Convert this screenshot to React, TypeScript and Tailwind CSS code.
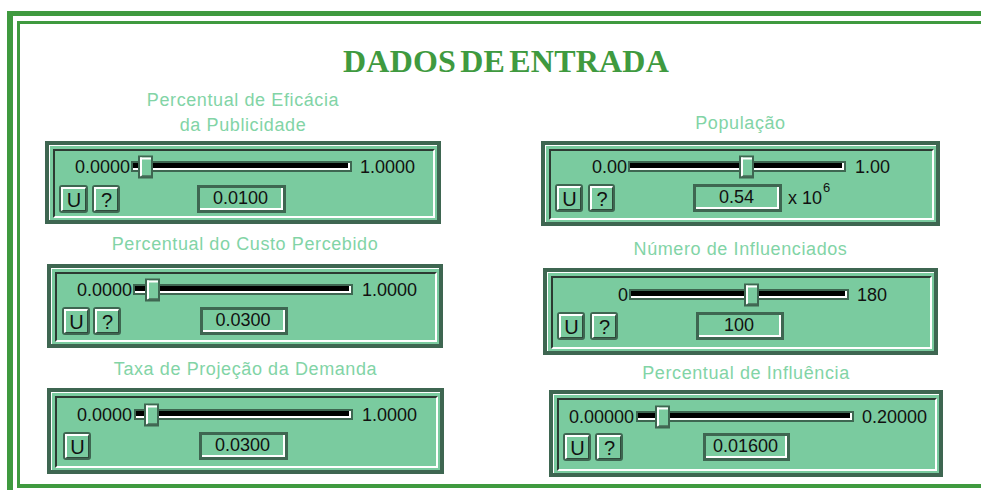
import React from "react";

type Panel = {
  label: string[];
  labelCls: string;
  box: string;
  min: string;
  minCls: string;
  max: string;
  maxCls: string;
  trackCls: string;
  thumbCls: string;
  rowCls: string;
  btnRowCls: string;
  uCls: string;
  qCls?: string;
  valCls: string;
  value: string;
  suffix?: boolean;
};

const left: Panel[] = [
  {
    label: ["Percentual de Eficácia", "da Publicidade"],
    labelCls: "ml-[25px] w-[396px] pt-[3px] mb-[3px]",
    box: "ml-[25px] w-[396px] h-[83px]",
    min: "0.0000",
    minCls: "w-[75px]",
    max: "1.0000",
    maxCls: "ml-[8px]",
    trackCls: "ml-[1px] w-[221px]",
    thumbCls: "left-[5px]",
    rowCls: "pt-[4px]",
    btnRowCls: "mt-[7px]",
    uCls: "ml-[4px] w-[29px]",
    qCls: "ml-[4px] w-[28px]",
    valCls: "ml-[77px] w-[89px]",
    value: "0.0100",
  },
  {
    label: ["Percentual do Custo Percebido"],
    labelCls: "ml-[27px] w-[396px] mt-[8px] mb-[7px]",
    box: "ml-[27px] w-[396px] h-[84px]",
    min: "0.0000",
    minCls: "w-[75px]",
    max: "1.0000",
    maxCls: "ml-[9px]",
    trackCls: "ml-[1px] w-[220px]",
    thumbCls: "left-[10px]",
    rowCls: "pt-[4px]",
    btnRowCls: "mt-[6px]",
    uCls: "ml-[5px] w-[28px]",
    qCls: "ml-[3px] w-[28px]",
    valCls: "ml-[79px] w-[88px]",
    value: "0.0300",
  },
  {
    label: ["Taxa de Projeção da Demanda"],
    labelCls: "ml-[27px] w-[397px] mt-[9px] mb-[6px]",
    box: "ml-[27px] w-[397px] h-[86px]",
    min: "0.0000",
    minCls: "w-[75px]",
    max: "1.0000",
    maxCls: "ml-[9px]",
    trackCls: "ml-[2px] w-[219px]",
    thumbCls: "left-[8px]",
    rowCls: "pt-[5px]",
    btnRowCls: "mt-[6px]",
    uCls: "ml-[6px] w-[28px]",
    valCls: "ml-[108px] w-[89px]",
    value: "0.0300",
  },
];

const right: Panel[] = [
  {
    label: ["População"],
    labelCls: "ml-[21px] w-[399px] mt-[26px] mb-[5px]",
    box: "ml-[21px] w-[399px] h-[85px]",
    min: "0.00",
    minCls: "w-[76px]",
    max: "1.00",
    maxCls: "ml-[9px]",
    trackCls: "ml-[1px] w-[218px]",
    thumbCls: "left-[109px]",
    rowCls: "pt-[4px]",
    btnRowCls: "mt-[6px]",
    uCls: "ml-[4px] w-[28px]",
    qCls: "ml-[5px] w-[27px]",
    valCls: "ml-[78px] w-[89px]",
    value: "0.54",
    suffix: true,
  },
  {
    label: ["Número de Influenciados"],
    labelCls: "ml-[23px] w-[395px] mt-[11px] mb-[6px]",
    box: "ml-[23px] w-[395px] h-[87px]",
    min: "0",
    minCls: "w-[75px]",
    max: "180",
    maxCls: "ml-[8px]",
    trackCls: "ml-[1px] w-[220px]",
    thumbCls: "left-[113px]",
    rowCls: "pt-[5px]",
    btnRowCls: "mt-[6px]",
    uCls: "ml-[4px] w-[28px]",
    qCls: "ml-[5px] w-[28px]",
    valCls: "ml-[78px] w-[88px]",
    value: "100",
  },
  {
    label: ["Percentual de Influência"],
    labelCls: "ml-[29px] w-[394px] mt-[6px] mb-[4px]",
    box: "ml-[29px] w-[394px] h-[87px]",
    min: "0.00000",
    minCls: "w-[75px]",
    max: "0.20000",
    maxCls: "ml-[8px]",
    trackCls: "ml-[2px] w-[218px]",
    thumbCls: "left-[17px]",
    rowCls: "pt-[5px]",
    btnRowCls: "mt-[5px]",
    uCls: "ml-[4px] w-[28px]",
    qCls: "ml-[4px] w-[28px]",
    valCls: "ml-[80px] w-[87px]",
    value: "0.01600",
  },
];

const Btn: React.FC<{ text: string; cls: string }> = ({ text, cls }) => (
  <div className={`${cls} h-[28px] border-2 border-[#3e6651] rounded-[3px] bg-[#7acb9f]`}>
    <div className="h-full border-t-2 border-l-2 border-white border-b border-r border-b-[#2f4a3b] border-r-[#2f4a3b] flex items-center justify-center text-[20px] leading-none text-[#111]">
      {text}
    </div>
  </div>
);

const SliderPanel: React.FC<{ p: Panel }> = ({ p }) => (
  <>
    {/* caption */}
    <div className={`${p.labelCls} text-center text-[18px] leading-[25px] tracking-[0.6px] text-[#82d4a6]`}>
      {p.label.map((l) => (
        <div key={l}>{l}</div>
      ))}
    </div>

    {/* panel */}
    <div className={`${p.box} border-4 border-[#3e6651] bg-[#7acb9f]`}>
      <div className="h-full border-t border-l border-white pt-[3px] pl-[3px] pr-[2px] pb-[2px]">
        <div className="h-full border-t-2 border-l-2 border-t-[#2c3a32] border-l-[#2c3a32] border-b-2 border-r-2 border-white text-[18px] text-[#111]">
          {/* slider row */}
          <div className={`${p.rowCls} flex items-center`}>
            <div className={`${p.minCls} h-[23px] flex items-center justify-end leading-none`}>{p.min}</div>
            <div className={`${p.trackCls} relative h-[11px] border-2 border-[#3e6651]`}>
              <div className="h-full bg-black border-b-2 border-r-2 border-white" />
              <div className={`${p.thumbCls} absolute top-1/2 -translate-y-1/2 w-[15px] h-[23px] border-2 border-[#3e6651] bg-[#7acb9f]`}>
                <div className="h-full border-t-2 border-l-2 border-white border-b border-b-[#2c3a32]" />
              </div>
            </div>
            <div className={`${p.maxCls} leading-none`}>{p.max}</div>
          </div>

          {/* buttons + value */}
          <div className={`${p.btnRowCls} flex items-center`}>
            <Btn text="U" cls={p.uCls} />
            {p.qCls && <Btn text="?" cls={p.qCls} />}
            <div className={`${p.valCls} h-[28px] border-[3px] border-[#3e6651]`}>
              <div className="h-full border-b-2 border-r-2 border-white flex items-center justify-center leading-none">
                {p.value}
              </div>
            </div>
            {p.suffix && (
              <div className="ml-[6px] leading-none flex items-start">
                <span>x 10</span>
                <span className="text-[13px] -mt-[8px] ml-[1px]">6</span>
              </div>
            )}
          </div>
        </div>
      </div>
    </div>
  </>
);

export default function App() {
  return (
    <div className="w-[981px] h-[490px] overflow-hidden bg-white" style={{ fontFamily: '"Liberation Sans", Arial, sans-serif' }}>
      {/* outer frame */}
      <div className="ml-[7px] mt-[11px] w-[1000px] h-[520px] border-l-[6px] border-t-[5px] border-[#3f9a3f] pl-[4px] pt-[5px]">
        {/* inner frame */}
        <div className="w-[990px] h-[467px] border-l-[3px] border-t-[3px] border-b-4 border-[#3f9a3f]">
          <div className="w-[972px] h-[61px] pt-[22px] text-center">
            <div
              className="text-[32px] leading-[30px] font-bold text-[#3f9a3f] tracking-[0.2px] [word-spacing:-4px]"
              style={{ fontFamily: '"Liberation Serif", "Times New Roman", serif' }}
            >
              DADOS DE ENTRADA
            </div>
          </div>
          <div className="flex">
            <div className="w-[500px] flex flex-col">
              {left.map((p) => (
                <SliderPanel key={p.label[0]} p={p} />
              ))}
            </div>
            <div className="w-[480px] flex flex-col">
              {right.map((p) => (
                <SliderPanel key={p.label[0]} p={p} />
              ))}
            </div>
          </div>
        </div>
      </div>
    </div>
  );
}
